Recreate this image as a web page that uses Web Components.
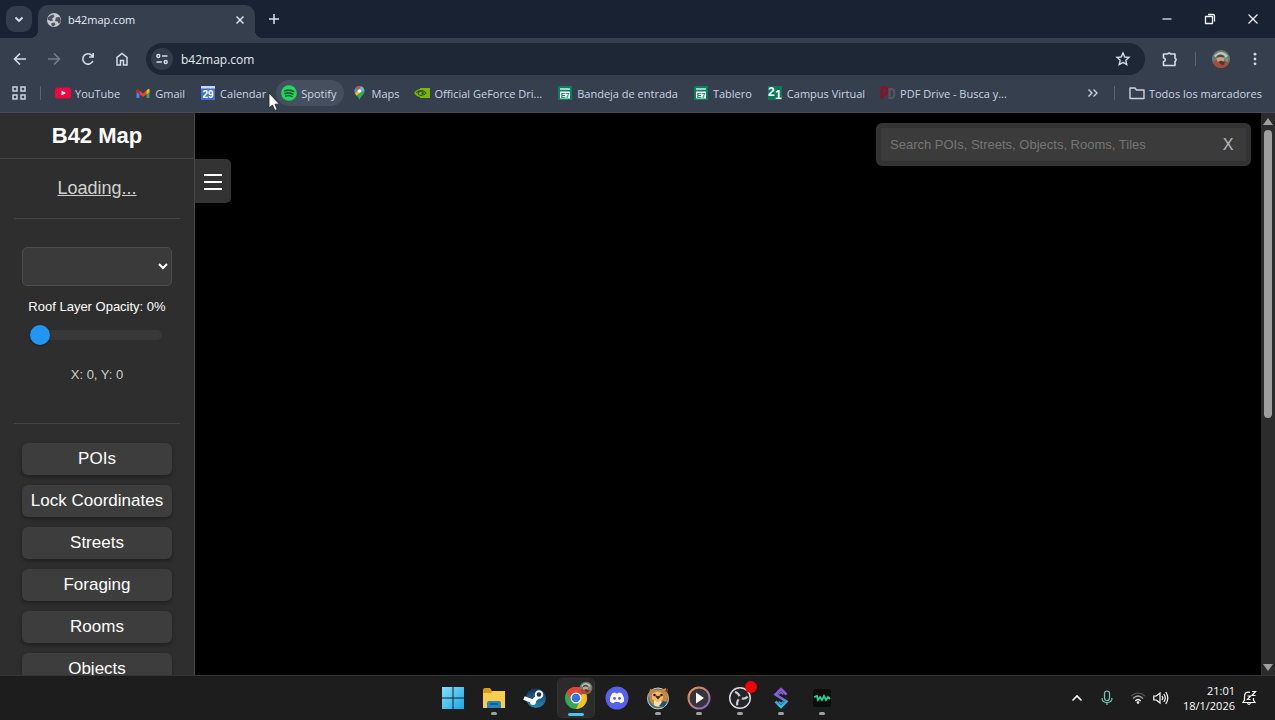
<!DOCTYPE html>
<html lang="es">
<head>
<meta charset="utf-8">
<title>b42map.com</title>
<style>
html,body{margin:0;height:100%;background:#000;overflow:hidden}
body{font-family:"Open Sans","Noto Sans",sans-serif;font-size:12px;color:#dbe3f0}
</style>
</head>
<body>
<desktop-screen></desktop-screen>
<script>
const define = (name, html, setup) => customElements.define(name, class extends HTMLElement {
  constructor() {
    super();
    const t = document.createElement('template');
    t.innerHTML = `<style>*{box-sizing:border-box}button{font:inherit;color:inherit;background:none;border:0;padding:0;margin:0}svg{display:block}</style>` + html;
    this.attachShadow({mode: 'open'}).appendChild(t.content.cloneNode(true));
    if (setup) setup(this);
  }
});

const icons = {
  down: ['0 0 16 16', '<path d="M4.5 6.5 8 10l3.5-3.5" fill="none" stroke="currentColor" stroke-width="1.8"/>'],
  globe: ['0 0 16 16', '<circle cx="8" cy="8" r="7" fill="#c5c9d0"/><path d="M2 5.500C4 3.500 5 3 7.500 2.500L8.500 4.500 6 6.500 7 8.500 4.500 9 1.500 7.500ZM10 5.500 13.500 5 15 9 13 12 11.500 9.500 9 9ZM5.500 11 8.500 10.500 9.500 12.500 7.500 14.500 5.500 13.500Z" fill="#4b5160"/>'],
  close: ['0 0 16 16', '<path d="m4.500 4.500 7 7m0-7-7 7" stroke="currentColor" stroke-width="1.500" fill="none"/>'],
  plus: ['0 0 16 16', '<path d="M8 3v10M3 8h10" stroke="currentColor" stroke-width="1.500"/>'],
  back: ['0 0 18 18', '<path d="M15 9H4M9 3.500 3.500 9 9 14.500" fill="none" stroke="currentColor" stroke-width="1.600"/>'],
  forward: ['0 0 18 18', '<path d="M3 9h11M9 3.500 14.500 9 9 14.500" fill="none" stroke="currentColor" stroke-width="1.600"/>'],
  reload: ['0 0 18 18', '<path d="M13.800 11A5.200 5.200 0 1 1 13 5.600l1 1.100M14.200 3v4h-4" fill="none" stroke="currentColor" stroke-width="1.600"/>'],
  home: ['0 0 18 18', '<path d="M4 7.300 9 3.500l5 3.800v7.700h-3.500V10.500h-3V15H4Z" fill="none" stroke="currentColor" stroke-width="1.500"/>'],
  tune: ['0 0 16 16', '<g fill="none" stroke="currentColor" stroke-width="1.400"><circle cx="4.300" cy="5" r="1.500"/><path d="M8 5h5.500M2.500 11H8"/><circle cx="11.700" cy="11" r="1.500"/></g>'],
  star: ['0 0 18 18', '<path d="m9 3 1.800 4 4.200.4-3.200 2.900 1 4.200L9 12.300l-3.800 2.200 1-4.200L3 7.400 7.200 7Z" fill="none" stroke="currentColor" stroke-width="1.400"/>'],
  puzzle: ['0 0 18 18', '<path d="M2.500 4h4.200a1.500 1.500 0 0 1 2.800 0H14v4.200a1.600 1.600 0 0 1 0 3V15.500H2.500v-3.700c2.400-.5 2.400-3.600 0-4.100Z" fill="none" stroke="currentColor" stroke-width="1.600" stroke-linejoin="round"/>'],
  dots: ['0 0 16 16', '<g fill="currentColor"><circle cx="8" cy="3.200" r="1.400"/><circle cx="8" cy="8" r="1.400"/><circle cx="8" cy="12.800" r="1.400"/></g>'],
  face: ['0 0 20 20', '<circle cx="10" cy="10" r="9" fill="#697f74"/><path d="M2 12q4-2 8 1 4-1 8-3-1 9-8 9-7 0-8-7Z" fill="#a54e35"/><path d="M3 7q7-8 14 0l-3 2H6Z" fill="#b7c9c0"/><ellipse cx="9.500" cy="9.500" rx="3.800" ry="4.500" fill="#c99f86"/><path d="M5.500 7q4-3 8 0v2q-4-2-8 0Z" fill="#4b4d45"/><path d="m7 13 3-1.500 4 2-2 3Z" fill="#483832"/><path d="M15 8q3 1 2 5l-3-1Z" fill="#6a9c91"/>'],
  minimize: ['0 0 16 16', '<path d="M3.500 8h9" stroke="currentColor" stroke-width="1.200"/>'],
  restore: ['0 0 16 16', '<path d="M3.500 5.500h7v7h-7ZM6 3.500h5q1.500 0 1.500 1.500v5.500" fill="none" stroke="currentColor" stroke-width="1.300" stroke-linejoin="round"/>'],
  winclose: ['0 0 16 16', '<path d="m3.500 3.500 9 9m0-9-9 9" stroke="currentColor" stroke-width="1.300"/>'],
  apps: ['0 0 16 16', '<path d="M2 2h4v4H2ZM10 2h4v4h-4ZM2 10h4v4H2ZM10 10h4v4h-4Z" fill="none" stroke="currentColor" stroke-width="1.500"/>'],
  youtube: ['0 0 16 16', '<rect x="0" y="2.500" width="16" height="11" rx="2.500" fill="#f0053f"/><path d="m6.500 5.500 4.500 2.500-4.500 2.500Z" fill="#fff"/>'],
  gmail: ['0 0 16 16', '<path d="M1.500 5v8h3V6Z" fill="#4285f4"/><path d="M11.500 6v7h3V5Z" fill="#34a853"/><path d="m4.500 5.500 3.500 3 3.500-3v3.800L8 12 4.500 9.300Z" fill="#ea4335"/><path d="M11.500 5.500q3-3.500 3 0v1.700l-3 2Z" fill="#fbbc04"/><path d="M1.500 5.500q0-3.500 3 0v3.800l-3-2.200Z" fill="#c5221f"/>'],
  calendar: ['0 0 16 16', '<path d="M1 1h14v14H1Z" fill="#3d71d8"/><path d="M1 1h14v2.500H1Z" fill="#c7d6f5"/><text x="8" y="12.500" text-anchor="middle" font-family="Liberation Sans" font-size="10" font-weight="700" fill="#fff">29</text>'],
  spotify: ['0 0 16 16', '<circle cx="8" cy="8" r="7.800" fill="#1ed760"/><path d="M3.500 5.800q5-1.500 9.300.8M4 8.500q4.300-1.300 8 .7M4.600 11q3.500-1 6.400.6" fill="none" stroke="#17482e" stroke-width="1.400" stroke-linecap="round"/>'],
  maps: ['0 0 16 16', '<path d="M8.500 1a5 5 0 0 0-5 5c0 4 4 5 5 9 1-4 5-5 5-9a5 5 0 0 0-5-5Z" fill="#34a853"/><path d="M8.500 1a5 5 0 0 0-3.900 1.800L7 5l3-3.800Z" fill="#ea4335"/><path d="M4.600 2.800a5 5 0 0 0-.6 5.400L7 5Z" fill="#4285f4"/><path d="M10 1.200a5 5 0 0 1 3.500 4.300L10 7.500 8.500 4Z" fill="#66a8ef"/><path d="M4 8.200 7 5l2 2.500-3.500 3.300Z" fill="#fbbc04"/><circle cx="8.500" cy="6" r="1.800" fill="#fff"/>'],
  nvidia: ['0 0 16 16', '<path d="M6 3h10v10H6Z" fill="#76b900"/><path d="M0 8q3-4.500 8-4 4 .5 6 4-3 4-7.500 4Q3 12 0 8Z" fill="#76b900"/><path d="M2 8q2.500-3 6-2.500 2.500.4 4 2.500-2.500 2.800-5 2.500-2.500-.3-3-2.500 1.500-2 3.500-1.500 1.500.3 2 1.500-1 1-2 .8" fill="none" stroke="#35481e" stroke-width="1.100"/>'],
  e21: ['0 0 16 16', '<path d="M1 1h14v14H1Z" fill="#07805d"/><path d="M3 4h10" stroke="#d8eee7" stroke-width="1.500"/><path d="M3 6.500h10v7H3Z" fill="#fff"/><text x="8" y="12.500" text-anchor="middle" font-family="Liberation Sans" font-size="7" font-weight="700" fill="#07805d">E7</text>'],
  campus: ['0 0 16 16', '<path d="M1 1h14v14H1Z" fill="#08795b"/><g font-family="Liberation Sans" font-size="12" font-weight="700" fill="#fff"><text x="1" y="11">2</text><text x="8" y="14">1</text></g>'],
  pdf: ['0 0 16 16', '<path d="M2 14V3h3.500q3 .500 2 4-1 2-3.500 2" fill="none" stroke="#8a102b" stroke-width="3"/><path d="M9.500 4v9q5 .500 5-4.500t-5-4.500Z" fill="none" stroke="#535660" stroke-width="2.200"/>'],
  more: ['0 0 16 16', '<path d="m3.500 4.500 3.500 3.500-3.500 3.500m5-7L12 8l-3.500 3.500" fill="none" stroke="currentColor" stroke-width="1.400"/>'],
  folder: ['0 0 16 16', '<path d="M1 3h5l1.500 2H15v8.500H1Z" fill="none" stroke="currentColor" stroke-width="1.400" stroke-linejoin="round"/>'],
  menu: ['0 0 18 18', '<path d="M0 2h18M0 9h18M0 16h18" stroke="#fff" stroke-width="2"/>'],
  pointer: ['0 0 20 20', '<path d="M1 1v15l3.500-3 2.300 5.500 2.400-1-2.200-5.300H11.500Z" fill="#fff" stroke="#222" stroke-width=".8"/>'],
  windows: ['0 0 24 24', '<defs><linearGradient id="g" x2="1" y2="1"><stop stop-color="#84e0fa"/><stop offset="1" stop-color="#1aa6e8"/></linearGradient></defs><path d="M1 1h10.500v10.500H1ZM12.500 1H23v10.500H12.500ZM1 12.500h10.500V23H1ZM12.500 12.500H23V23H12.500Z" fill="url(#g)"/>'],
  explorer: ['0 0 24 24', '<path d="M1 4q0-2 2-2h5l2 3h13v9H1Z" fill="#d99a16"/><path d="M1 7h8l2-2h12v17H1Z" fill="#fdcd4c"/><path d="M5 22v-5q0-2 2-2h10q2 0 2 2v5Z" fill="#2584bf"/><path d="M8 18h8" stroke="#155f94" stroke-width="2"/>'],
  steam: ['0 0 24 24', '<defs><linearGradient id="g" y2="1" x2="0"><stop stop-color="#152b58"/><stop offset="1" stop-color="#248bb4"/></linearGradient></defs><circle cx="13" cy="12" r="10" fill="url(#g)"/><path d="m1 12 9 3.500 5-5" stroke="#fff" stroke-width="4" fill="none"/><circle cx="10" cy="16" r="3" fill="#fff"/><circle cx="16" cy="8.500" r="3.300" fill="#17325f" stroke="#fff" stroke-width="2"/>'],
  chrome: ['0 0 24 24', '<circle cx="12" cy="12" r="11" fill="#34a853"/><path d="M12 12 2.500 6.500A11 11 0 0 1 21.500 6.500Z" fill="#e94235"/><path d="M12 12 21.500 6.500A11 11 0 0 1 12 23l4-8Z" fill="#fbc116"/><path d="M12 7h9.800L21 5.500A11 11 0 0 0 2.500 6.500L8 15Z" fill="#e94235"/><circle cx="12" cy="12" r="5.500" fill="#fff"/><circle cx="12" cy="12" r="4.300" fill="#3177e4"/>'],
  discord: ['0 0 24 24', '<circle cx="12" cy="12" r="11.500" fill="#5562e8"/><path d="M7 7.500q2-1.200 3.500-1l.5 1h2l.5-1q1.500-.2 3.500 1 2.500 4 2 8-1.800 1.500-3.800 1.800L14 15.700q-2 .4-4 0l-1.200 1.600Q6.800 17 5 15.500q-.5-4 2-8Z" fill="#fff"/><ellipse cx="9.500" cy="12.300" rx="1.400" ry="1.600" fill="#5562e8"/><ellipse cx="14.500" cy="12.300" rx="1.400" ry="1.600" fill="#5562e8"/>'],
  hamster: ['0 0 24 24', '<circle cx="12" cy="12.500" r="10.500" fill="#53778a" stroke="#c9c9b8"/><path d="M3 8 4 3l5 1q3-1 6 0l5-2 1 6q2 8-5 12-8 2-12-5Z" fill="#c98637"/><path d="M6 8q6-5 11 0v5q-5 5-11 0Z" fill="#efbd70"/><path d="m10 10 2 2 2-2" stroke="#563019" stroke-width="2"/><circle cx="8.500" cy="9" r="1.300" fill="#2b1b10"/><circle cx="15.500" cy="9" r="1.300" fill="#2b1b10"/><path d="M8 14q4 3 7 0l1 5q-4 3-8 0Z" fill="#f4dfb0"/><path d="m17 15 4 1-3 5-5-1Z" fill="#264f70"/><path d="m19 5 3-3v5Z" fill="#684028"/>'],
  player: ['0 0 24 24', '<defs><linearGradient id="g" x2="1" y2="1"><stop stop-color="#f3924b"/><stop offset="1" stop-color="#8065bf"/></linearGradient></defs><circle cx="12" cy="12" r="10.500" fill="#35343a" stroke="url(#g)" stroke-width="2"/><path d="m9 6.500 8 5.500-8 5.500Z" fill="#fff"/>'],
  obs: ['0 0 24 24', '<circle cx="12" cy="12" r="10.300" fill="#242528" stroke="#ddd" stroke-width="1.500"/><g fill="none" stroke="#ccc" stroke-width="2.300"><path d="M12 12q-1-5-5-6"/><path d="M12 12q-1-5-5-6" transform="rotate(120 12 12)"/><path d="M12 12q-1-5-5-6" transform="rotate(240 12 12)"/></g><circle cx="12" cy="12" r="2" fill="#242528"/>'],
  swirl: ['0 0 24 24', '<defs><linearGradient id="g" gradientUnits="userSpaceOnUse" x1="0" x2="0" y1="2" y2="22"><stop stop-color="#a54be1"/><stop offset=".5" stop-color="#6673d8"/><stop offset="1" stop-color="#18d8db"/></linearGradient></defs><path d="M17.500 8.500 12 3 6.500 8.500l11 7L12 21l-5.500-5.500" fill="none" stroke="url(#g)" stroke-width="2.600"/><path d="m9.500 8.500 2.500-2.300 2.300 2.300M9.700 15.500l2.300 2.300 2.500-2.300" fill="none" stroke="url(#g)" stroke-width="1.500"/>'],
  wave: ['0 0 24 24', '<rect x="3" y="3" width="18" height="18" rx="2" fill="#0b0c0c"/><path d="m4 11 3-1 1 4 2-3 2 3 2-4 2 4 2-3 2 2" fill="none" stroke="#16d39b" stroke-width="1.800"/>'],
  up: ['0 0 16 16', '<path d="m3.500 10.500 4.500-4.500 4.500 4.500" fill="none" stroke="currentColor" stroke-width="1.600"/>'],
  mic: ['0 0 16 16', '<g fill="none" stroke="#76c9b7" stroke-width="1.200"><rect x="5.500" y="1" width="5" height="9.500" rx="2.500"/><path d="M3 8q0 4.500 5 4.500T13 8M8 12.500V15"/></g>'],
  wifi: ['0 0 16 16', '<g fill="none"><path d="M1 6q7-6 14 0" stroke="#555" stroke-width="1.200"/><path d="M3 8.500q5-5 10 0" stroke="#aaa" stroke-width="1.300"/><path d="M5.300 11q2.700-3 5.400 0" stroke="#fff" stroke-width="1.500"/></g><circle cx="8" cy="12.500" r="1.300" fill="#fff"/>'],
  sound: ['0 0 16 16', '<g fill="none" stroke="currentColor" stroke-width="1.200"><path d="M.8 6v4h2.500L7 13V3L3.300 6Z"/><path d="M9 6q1.500 2 0 4m1.800-6q3 4 0 8m2-10q4 6 0 12"/></g>'],
  bell: ['0 0 16 16', '<g fill="none" stroke="currentColor" stroke-width="1.200"><path d="M9 2.300Q3.500 1 3.500 7v3L2 12.500h12L12.500 10V8M6.500 13q1.500 3 3 0M11 1.500h3.500l-3.500 4h3.500M6.500 6h3l-3 3.500h3"/></g>']
};

customElements.define('ui-icon', class extends HTMLElement {
  static observedAttributes = ['name', 'size'];
  constructor() {
    super();
    this.attachShadow({mode: 'open'});
  }
  attributeChangedCallback() {
    const icon = icons[this.getAttribute('name')];
    if (!icon) return;
    const s = this.getAttribute('size') || 16;
    this.shadowRoot.innerHTML =
      `<style>:host{display:block;flex:none}svg{display:block}</style><svg width="${s}" height="${s}" viewBox="${icon[0]}" aria-hidden="true">${icon[1]}</svg>`;
  }
});

define('tab-strip', `<style>
:host{display:flex;height:38px;padding:0 14px 0 6px;background:#182232;align-items:center}
.search{width:26px;height:26px;border-radius:9px;background:#333c4c;display:grid;place-items:center}
.tab{align-self:flex-end;position:relative;display:flex;align-items:center;gap:6px;width:217px;height:33px;margin-left:6px;padding:0 7px 4px 8px;background:#353f4e;border-radius:10px 10px 0 0}
.tab::before,.tab::after{content:"";position:absolute;bottom:0;width:8px;height:8px}
.tab::before{left:-8px;background:radial-gradient(circle at 0 0,transparent 8px,#353f4e 8px)}
.tab::after{right:-8px;background:radial-gradient(circle at 100% 0,transparent 8px,#353f4e 8px)}
.title{flex:1;color:#e8edf5;font-size:11px}
.new{margin-left:11px}
.win{margin-left:auto;display:flex;gap:27px;color:#f1f4f8}
</style>
<button class="search" aria-label="Buscar pestañas"><ui-icon name="down"></ui-icon></button>
<div class="tab"><ui-icon name="globe"></ui-icon><span class="title">b42map.com</span><button aria-label="Cerrar pestaña"><ui-icon name="close"></ui-icon></button></div>
<button class="new" aria-label="Nueva pestaña"><ui-icon name="plus"></ui-icon></button>
<div class="win"><button aria-label="Minimizar"><ui-icon name="minimize"></ui-icon></button><button aria-label="Restaurar"><ui-icon name="restore"></ui-icon></button><button aria-label="Cerrar"><ui-icon name="winclose"></ui-icon></button></div>`);

define('nav-bar', `<style>
:host{display:flex;align-items:center;height:42px;padding:0 12px 0 11px;background:#353f4e;color:#d4dceb}
.nav{display:flex;gap:16px}
.off{color:#747d8c}
.box{flex:1;display:flex;align-items:center;height:32px;margin:0 16px 0 15px;padding:0 13px 0 5px;border-radius:16px;background:#1d2736}
.tune{width:22px;height:22px;border-radius:11px;background:#333d4c;display:grid;place-items:center}
input{flex:1;min-width:0;background:none;border:0;outline:0;padding:0 8px;font:12px "Open Sans","Noto Sans",sans-serif;color:#e6ebf3}
.sep{width:1px;height:14px;background:#596475;margin:0 15px 0 16px}
.right{display:flex;align-items:center;gap:16px}
</style>
<div class="nav"><button aria-label="Atrás"><ui-icon name="back" size="18"></ui-icon></button><button class="off" aria-label="Adelante"><ui-icon name="forward" size="18"></ui-icon></button><button aria-label="Recargar"><ui-icon name="reload" size="18"></ui-icon></button><button aria-label="Inicio"><ui-icon name="home" size="18"></ui-icon></button></div>
<div class="box"><button class="tune" aria-label="Información del sitio"><ui-icon name="tune"></ui-icon></button><input aria-label="Dirección" value="b42map.com"><button aria-label="Añadir a marcadores"><ui-icon name="star" size="18"></ui-icon></button></div>
<button aria-label="Extensiones"><ui-icon name="puzzle" size="18"></ui-icon></button><i class="sep"></i>
<div class="right"><button aria-label="Perfil"><ui-icon name="face" size="20"></ui-icon></button><button aria-label="Menú"><ui-icon name="dots"></ui-icon></button></div>`);

define('book-mark', `<style>
:host{display:block;flex:none}
a{display:flex;align-items:center;gap:4px;height:26px;padding:0 8px 0 5px;border-radius:13px;color:inherit;text-decoration:none;white-space:nowrap}
:host([hovered]) a{background:#464f5e}
</style><a href="#"><ui-icon></ui-icon><span><slot></slot></span></a>`,
el => el.shadowRoot.querySelector('ui-icon').setAttribute('name', el.getAttribute('icon')));

define('bookmarks-bar', `<style>
:host{display:flex;align-items:center;height:33px;padding:0 5px 6px 11px;background:#353f4e;border-bottom:1px solid #444b57;color:#cbd4e3;font-size:11px;position:relative}
.sep{width:1px;height:14px;background:#596475;margin:0 9px 0 13px}
.list{display:flex;gap:2px}
.end{margin-left:auto;display:flex;align-items:center}
.pointer{position:absolute;left:268px;top:12px}
</style>
<button aria-label="Aplicaciones"><ui-icon name="apps"></ui-icon></button><i class="sep"></i>
<nav class="list"><book-mark icon="youtube">YouTube</book-mark><book-mark icon="gmail">Gmail</book-mark><book-mark icon="calendar">Calendar</book-mark><book-mark icon="spotify" hovered>Spotify</book-mark><book-mark icon="maps">Maps</book-mark><book-mark icon="nvidia">Official GeForce Dri...</book-mark><book-mark icon="e21">Bandeja de entrada</book-mark><book-mark icon="e21">Tablero</book-mark><book-mark icon="campus">Campus Virtual</book-mark><book-mark icon="pdf">PDF Drive - Busca y...</book-mark></nav>
<div class="end"><button aria-label="Más marcadores"><ui-icon name="more"></ui-icon></button><i class="sep"></i><book-mark icon="folder">Todos los marcadores</book-mark></div>
<ui-icon class="pointer" name="pointer" size="20"></ui-icon>`);

define('side-button', `<style>
:host{display:block}
button{display:block;width:100%;height:32px;border-radius:6px;background:#3d3d3d;color:#fff;font-size:17px;line-height:32px;box-shadow:0 2px 4px rgba(0,0,0,.35);white-space:nowrap}
</style><button><slot></slot></button>`);

define('map-sidebar', `<style>
:host{display:block;flex:none;width:195px;background:#2e2e2e;border-right:1px solid #4a4a4a;overflow:hidden;text-align:center;color:#fff}
h1{margin:0;height:46px;font-size:22px;line-height:46px;border-bottom:1px solid #444}
section{margin:0 14px;padding:0 8px;border-bottom:1px solid #444}
.status{height:60px;line-height:58px}
a{font-size:18px;color:#d2d2d2;text-decoration:underline}
select{display:block;width:100%;height:39px;margin:28px 0 11px;border:1px solid #4c4c4c;border-radius:5px;background:#3a3a3a;color:#fff}
label{display:block;font-size:13px;line-height:20px;white-space:nowrap}
input{appearance:none;display:block;width:calc(100% - 18px);height:10px;margin:13px 9px 25px 8px;border-radius:5px;background:#383838;outline:0}
input::-webkit-slider-thumb{appearance:none;width:20px;height:20px;border-radius:50%;background:#2196f3;box-shadow:0 1px 3px rgba(0,0,0,.4)}
output{display:block;font-size:13px;line-height:20px;color:#ccc;padding-bottom:38px}
.buttons{border:0;padding-top:19px;display:grid;gap:10px}
</style>
<h1>B42 Map</h1>
<section class="status"><a href="#">Loading...</a></section>
<section><select aria-label="Capa del mapa"></select><label for="roof">Roof Layer Opacity: 0%</label><input id="roof" type="range" min="0" max="100" value="0"><output>X: 0, Y: 0</output></section>
<section class="buttons"><side-button>POIs</side-button><side-button>Lock Coordinates</side-button><side-button>Streets</side-button><side-button>Foraging</side-button><side-button>Rooms</side-button><side-button>Objects</side-button></section>`);

define('map-view', `<style>
:host{flex:1;display:flex;justify-content:space-between;align-items:flex-start;background:#000;min-width:0}
.toggle{margin-top:46px;width:36px;height:44px;padding-top:2px;border-radius:0 5px 5px 0;background:#333;display:grid;place-items:center}
form{display:flex;align-items:center;width:375px;margin:10px 10px 0 0;height:43px;border:5px solid #333;border-radius:6px;background:#3b3b3b}
input{flex:1;min-width:0;border:0;outline:0;background:none;padding:0 9px;font:13px "Liberation Sans",Arial,sans-serif;color:#ddd}
input::placeholder{color:#757575;opacity:1}
form button{width:36px;font-size:16px;color:#bdbdbd}
</style>
<button class="toggle" aria-label="Menú"><ui-icon name="menu" size="18"></ui-icon></button>
<form><input placeholder="Search POIs, Streets, Objects, Rooms, Tiles" aria-label="Search"><button type="button">X</button></form>`);

define('scroll-rail', `<style>
:host{display:flex;flex-direction:column;align-items:center;flex:none;width:14px;background:#2c2c2c;padding:5px 0 4px}
.up,.down{border:solid transparent;border-width:0 5px}
.up{border-bottom:7px solid #9f9f9f}.down{border-top:7px solid #9f9f9f}
.track{flex:1;padding-top:5px}
.thumb{width:8px;height:54%;border-radius:4px;background:#9f9f9f}
</style><i class="up"></i><div class="track"><div class="thumb"></div></div><i class="down"></i>`);

define('task-item', `<style>
:host{display:block;width:36px;height:38px;border-radius:4px;position:relative}
button{display:grid;justify-items:center;align-content:start;width:100%;height:100%;padding-top:7px}
:host([active]){background:#2b2b2b;outline:1px solid #333}
:host([running])::after{content:"";position:absolute;left:50%;bottom:2px;width:6px;height:3px;margin-left:-3px;border-radius:2px;background:#a0a0a0}
:host([active])::after{width:16px;margin-left:-8px;background:#4cc2ee;bottom:1px}
.badge{position:absolute;right:1px;top:2px}
</style><button><ui-icon size="24"></ui-icon></button><span class="badge"><slot></slot></span>`,
el => {
  el.shadowRoot.querySelector('ui-icon').setAttribute('name', el.getAttribute('icon'));
  el.shadowRoot.querySelector('button').setAttribute('aria-label', el.getAttribute('icon'));
});

define('task-bar', `<style>
:host{display:grid;grid-template-columns:1fr auto 1fr;align-items:center;height:45px;background:#1d1d1d;border-top:1px solid #343434;color:#fff}
.apps{grid-column:2;display:flex;gap:5px;padding:0 0 1px}
.dot{display:block;width:12px;height:12px;border-radius:50%;background:#f00008}
.tray{justify-self:end;display:flex;align-items:center;padding-right:18px}
.net{display:flex;gap:7px;margin:0 14px 0 15px}
.mic{margin-left:14px}
time{font-size:11px;line-height:15px;text-align:right;margin-right:6px}
</style>
<div class="apps"><task-item icon="windows"></task-item><task-item icon="explorer" running></task-item><task-item icon="steam"></task-item><task-item icon="chrome" running active><ui-icon name="face" size="14"></ui-icon></task-item><task-item icon="discord"></task-item><task-item icon="hamster" running></task-item><task-item icon="player" running></task-item><task-item icon="obs" running><i class="dot"></i></task-item><task-item icon="swirl" running></task-item><task-item icon="wave" running></task-item></div>
<div class="tray"><button aria-label="Iconos ocultos"><ui-icon name="up"></ui-icon></button><ui-icon class="mic" name="mic"></ui-icon><div class="net"><ui-icon name="wifi"></ui-icon><ui-icon name="sound"></ui-icon></div><time datetime="2026-01-18T21:01">21:01<br>18/1/2026</time><ui-icon name="bell"></ui-icon></div>`);

define('desktop-screen', `<style>
:host{display:flex;flex-direction:column;height:100vh}
main{flex:1;min-height:0;display:flex;font-family:"Liberation Sans",Arial,sans-serif}
</style><tab-strip></tab-strip><nav-bar></nav-bar><bookmarks-bar></bookmarks-bar><main><map-sidebar></map-sidebar><map-view></map-view><scroll-rail></scroll-rail></main><task-bar></task-bar>`);
</script>
</body>
</html>
